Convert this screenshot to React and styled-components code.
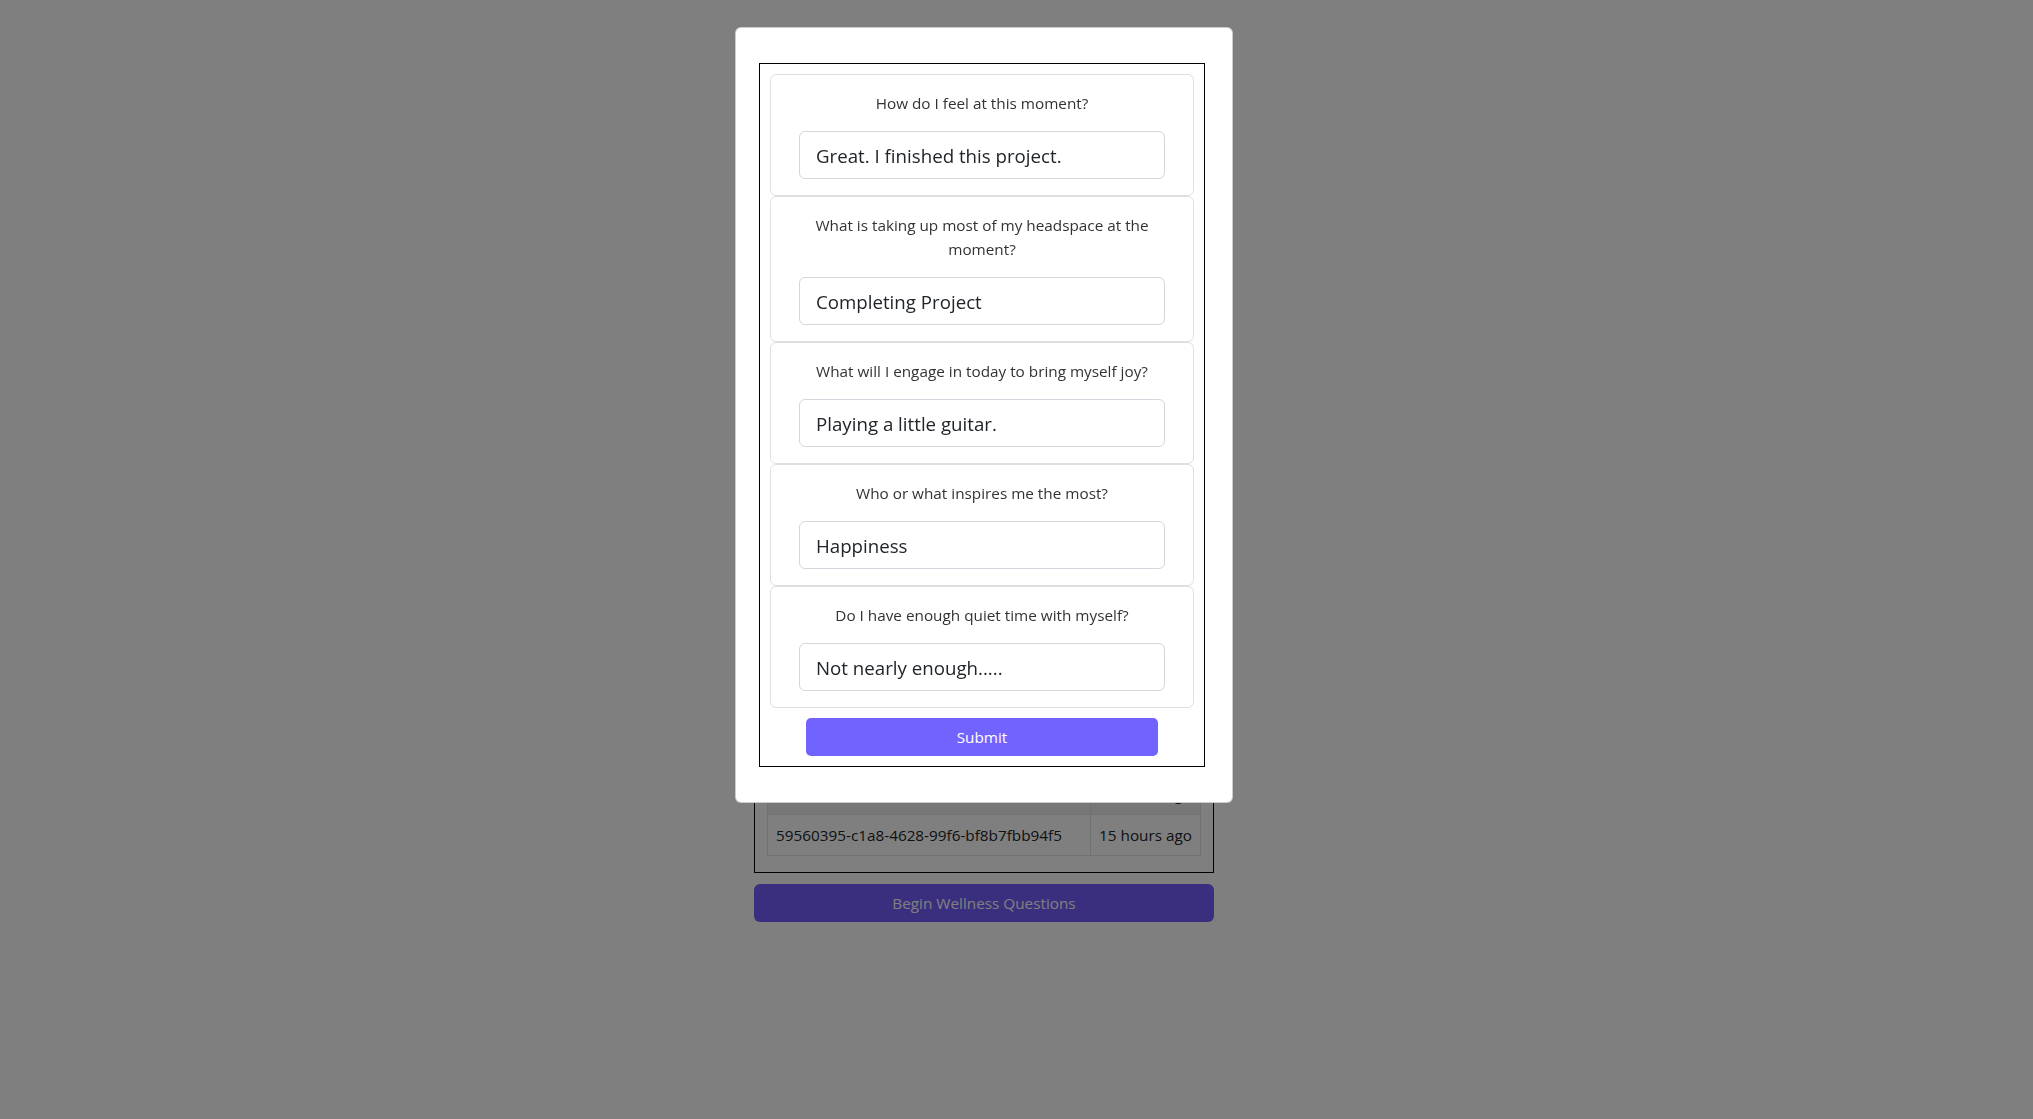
import React from "react";
import styled, { createGlobalStyle } from "styled-components";

const GlobalStyle = createGlobalStyle`
  *, *::before, *::after { box-sizing: border-box; }
  html, body { margin: 0; padding: 0; background: #ffffff; }
  body {
    font-family: "Open Sans", "Noto Sans", "Liberation Sans", sans-serif;
    color: #212529;
  }
`;

/* ---------- page behind the modal ---------- */

const Page = styled.main`
  display: flex;
  flex-direction: column;
  align-items: center;
  padding: 596px 65px 0 0;
  min-height: 1119px;
`;

const HistoryBox = styled.section`
  width: 460px;
  border: 1px solid #000;
  padding: 12px 12px 16px;
`;

const Table = styled.table`
  width: 100%;
  border-collapse: collapse;
  font-size: 15.3px;
  line-height: 24px;
  color: #212529;
`;

const Row = styled.tr`
  background: ${(p) => (p.$striped ? "#eeeeee" : "#ffffff")};
`;

const Cell = styled.td`
  padding: 8px;
  border: 1px solid #dee2e6;
  white-space: nowrap;
  text-align: ${(p) => (p.$align === "right" ? "right" : "left")};
`;

const HeadCell = styled.th`
  padding: 8px;
  border: 1px solid #dee2e6;
  text-align: left;
  font-weight: 700;
`;

const BeginButton = styled.button`
  width: 460px;
  height: 38px;
  margin-top: 11px;
  border: none;
  border-radius: 6px;
  background: #745efc;
  color: #ffffff;
  font-family: inherit;
  font-size: 15.3px;
  cursor: pointer;
`;

/* ---------- modal ---------- */

const Overlay = styled.div`
  position: fixed;
  inset: 0;
  background: rgba(0, 0, 0, 0.5);
  display: flex;
  justify-content: center;
  align-items: flex-start;
  padding: 27px 65px 0 0;
`;

const Dialog = styled.div`
  width: 498px;
  background: #ffffff;
  border: 1px solid rgba(0, 0, 0, 0.2);
  border-radius: 6px;
  padding: 35px 27px 35px 23px;
`;

const Form = styled.form`
  border: 1px solid #000000;
  padding: 10px;
  display: flex;
  flex-direction: column;
  align-items: center;
`;

const QuestionCard = styled.div`
  width: 100%;
  border: 1px solid rgba(0, 0, 0, 0.125);
  border-radius: 6px;
  padding: 16px 28px;
  display: flex;
  flex-direction: column;
  align-items: stretch;
  gap: 16px;
`;

const Question = styled.label`
  margin: 0;
  font-size: 15.3px;
  line-height: 24px;
  color: #333333;
  text-align: center;
`;

const Answer = styled.input`
  width: 100%;
  height: 48px;
  padding: 8px 16px;
  border: 1px solid #d6d6de;
  border-radius: 6px;
  font-family: inherit;
  font-size: 18.7px;
  line-height: 30px;
  color: #212529;
  background: #ffffff;
  outline: none;
`;

const SubmitButton = styled.button`
  width: 352px;
  height: 38px;
  margin-top: 10px;
  border: none;
  border-radius: 5px;
  background: #7263ff;
  color: #ffffff;
  font-family: inherit;
  font-size: 15.3px;
  cursor: pointer;
`;

const questions = [
  { q: "How do I feel at this moment?", a: "Great. I finished this project." },
  { q: "What is taking up most of my headspace at the moment?", a: "Completing Project" },
  { q: "What will I engage in today to bring myself joy?", a: "Playing a little guitar." },
  { q: "Who or what inspires me the most?", a: "Happiness" },
  { q: "Do I have enough quiet time with myself?", a: "Not nearly enough....." },
];

const entries = [
  { id: "0b3f2c7e-91d4-4a1e-8c5b-2f6e7d9a1c30", when: "2 days ago" },
  { id: "6d1a9e42-3b7c-4f08-a2e5-9c4b1d7f6e21", when: "2 days ago" },
  { id: "a47c5e19-8d2f-4b63-b0a1-7e5d3c9f2b84", when: "a day ago" },
  { id: "e82b6f03-5c9a-41d7-9f3e-0a8c2b5d7e16", when: "15 hours ago" },
  { id: "59560395-c1a8-4628-99f6-bf8b7fbb94f5", when: "15 hours ago" },
];

export default function App() {
  return (
    <>
      <GlobalStyle />
      <Page>
        <HistoryBox>
          <Table>
            <colgroup>
              <col style={{ width: "323px" }} />
              <col />
            </colgroup>
            <thead>
              <Row>
                <HeadCell>Entry</HeadCell>
                <HeadCell>Created</HeadCell>
              </Row>
            </thead>
            <tbody>
              {entries.map((e, i) => (
                <Row key={e.id} $striped={i % 2 === 1}>
                  <Cell>{e.id}</Cell>
                  <Cell $align="right">{e.when}</Cell>
                </Row>
              ))}
            </tbody>
          </Table>
        </HistoryBox>
        <BeginButton type="button">Begin Wellness Questions</BeginButton>
      </Page>

      <Overlay>
        <Dialog role="dialog">
          <Form onSubmit={(ev) => ev.preventDefault()}>
            {questions.map((item, i) => (
              <QuestionCard key={i}>
                <Question htmlFor={`q${i}`}>{item.q}</Question>
                <Answer id={`q${i}`} defaultValue={item.a} />
              </QuestionCard>
            ))}
            <SubmitButton type="submit">Submit</SubmitButton>
          </Form>
        </Dialog>
      </Overlay>
    </>
  );
}
